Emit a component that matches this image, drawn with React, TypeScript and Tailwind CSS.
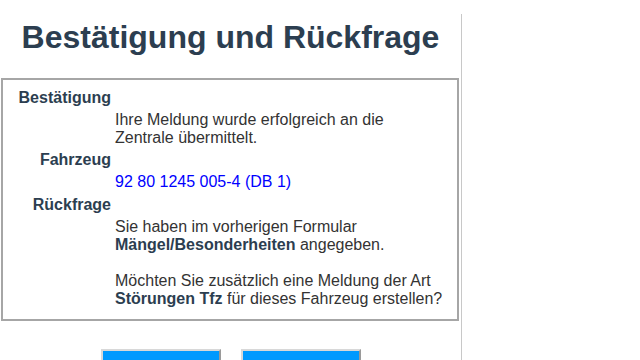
export default function App() {
  const font = { fontFamily: '"Liberation Sans", Arial, sans-serif' };
  return (
    <div className="w-[640px] h-[360px] overflow-hidden bg-white flex" style={font}>
      <div className="w-[461px] shrink-0 flex flex-col">
        {/* Title */}
        <h1 className="shrink-0 h-[78px] pt-[17px] text-center text-[32px] leading-[40px] font-bold text-[#2c3e50]">
          Bestätigung und Rückfrage
        </h1>

        {/* Confirmation box */}
        <div className="shrink-0 ml-px w-[458px] h-[243px] border-2 border-[#a6a6a6] pt-[9px] text-[16px] leading-[18px] text-[#333]">
          <div className="flex flex-col gap-[4px]">
            <div className="w-[108px] text-right font-bold text-[#2c3e50]">Bestätigung</div>
            <div className="pl-[112px]">
              Ihre Meldung wurde erfolgreich an die
              <br />
              Zentrale übermittelt.
            </div>
            <div className="w-[108px] text-right font-bold text-[#2c3e50]">Fahrzeug</div>
            <div className="pl-[112px] text-[#0000ff]">92 80 1245 005-4 (DB 1)</div>
            <div className="mt-px w-[108px] text-right font-bold text-[#2c3e50]">Rückfrage</div>
            <div className="pl-[112px]">
              Sie haben im vorherigen Formular
              <br />
              <b className="text-[#2c3e50]">Mängel/Besonderheiten</b> angegeben.
              <br />
              <br />
              Möchten Sie zusätzlich eine Meldung der Art
              <br />
              <b className="text-[#2c3e50]">Störungen Tfz</b> für dieses Fahrzeug erstellen?
            </div>
          </div>
        </div>

        {/* Buttons */}
        <div className="shrink-0 mt-[28px] flex justify-center gap-[20px]">
          <button className="w-[120px] h-[40px] bg-[#0099ff] border-2 border-t-[#d8d8d8] border-l-[#d8d8d8] border-r-[#9a9a9a] border-b-[#9a9a9a]" />
          <button className="w-[120px] h-[40px] bg-[#0099ff] border-2 border-t-[#d8d8d8] border-l-[#d8d8d8] border-r-[#9a9a9a] border-b-[#9a9a9a]" />
        </div>
      </div>

      {/* Divider */}
      <div className="w-px mt-[14px] bg-[#c8c8c8]" />
    </div>
  );
}
